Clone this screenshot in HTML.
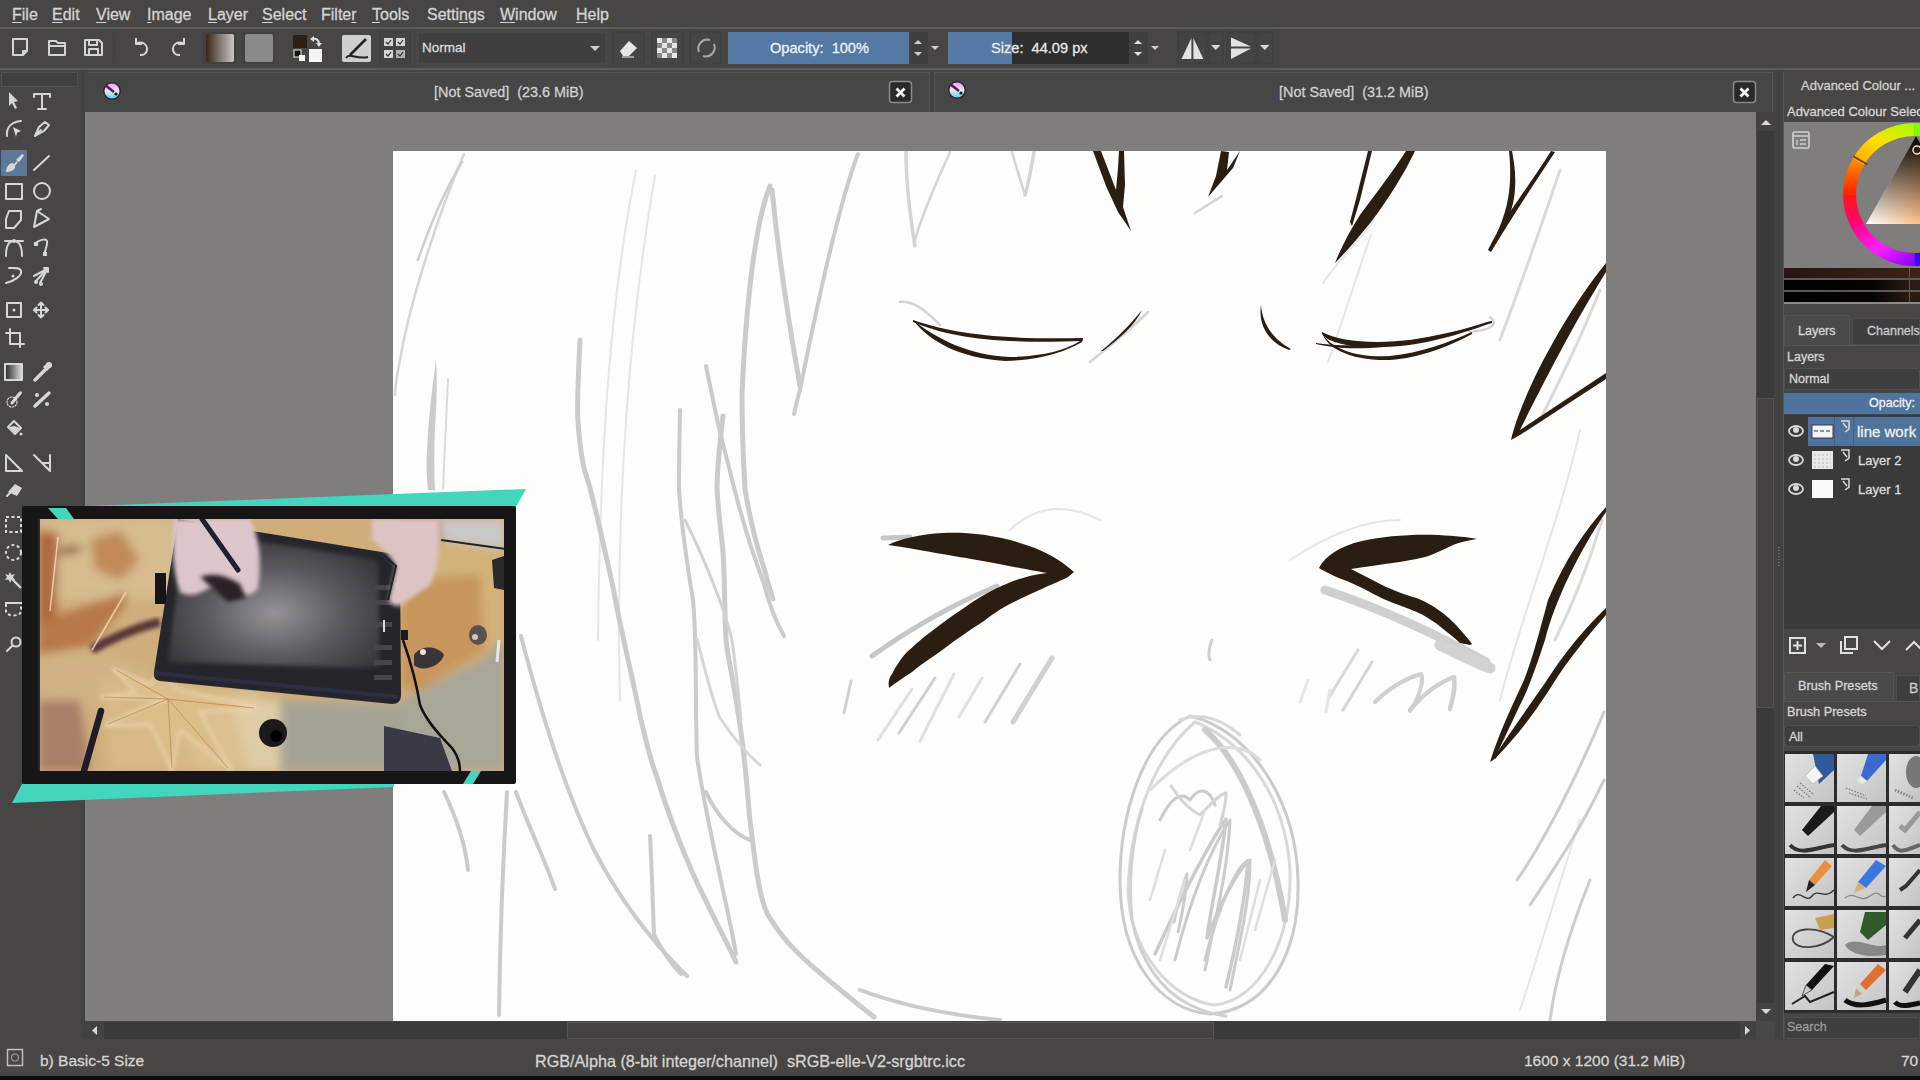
<!DOCTYPE html>
<html><head><meta charset="utf-8">
<style>
*{margin:0;padding:0;box-sizing:border-box}
html,body{width:1920px;height:1080px;overflow:hidden;background:#484848;font-family:"Liberation Sans",sans-serif;color:#d8d8d8}
.a{position:absolute}
.t{position:absolute;white-space:nowrap;color:#d6d6d6;line-height:1;-webkit-text-stroke:0.3px currentColor}
.menu .t{top:7px;font-size:16px;color:#d4d4d4}
u{text-decoration-thickness:1px;text-underline-offset:2px}
svg{position:absolute;left:0;top:0}
</style></head><body>
<!-- ===== backgrounds ===== -->
<div class="a" style="left:0;top:0;width:1920px;height:28px;background:#474644"></div>
<div class="a" style="left:0;top:27px;width:1920px;height:2px;background:#5a5a5a"></div>
<div class="a" style="left:0;top:29px;width:1920px;height:39px;background:#474644"></div>
<div class="a" style="left:0;top:68px;width:1920px;height:2px;background:#5a5a5a"></div>

<!-- left toolbox -->
<div class="a" style="left:0;top:70px;width:83px;height:970px;background:#474644"></div>
<div class="a" style="left:1px;top:72px;width:77px;height:15px;background:#414141;border:1px solid #525252"></div>
<div class="a" style="left:81px;top:70px;width:4px;height:970px;background:#424242"></div>

<!-- tab bar -->
<div id="tabbar" class="a" style="left:85px;top:70px;width:1691px;height:42px;background:#464646"></div>
<div class="a" style="left:88px;top:72px;width:1685px;height:1px;background:#555"></div>
<div class="a" style="left:929px;top:72px;width:6px;height:40px;background:#424140;border-left:1px solid #555;border-right:1px solid #555"></div>
<div class="a" style="left:1772px;top:72px;width:1px;height:40px;background:#555"></div>

<!-- canvas area -->
<div class="a" style="left:85px;top:112px;width:1671px;height:909px;background:#7f7e7c"></div>
<div class="a" style="left:393px;top:151px;width:1213px;height:870px;background:#fdfdfb"></div>
<!-- v scrollbar -->
<div class="a" style="left:1756px;top:112px;width:19px;height:909px;background:#434240"></div>
<div class="a" style="left:1757px;top:131px;width:17px;height:872px;background:#3a3a39"></div>
<div class="a" style="left:1757px;top:398px;width:17px;height:310px;background:#444341;border:1px solid #555452"></div>
<!-- h scrollbar -->
<div class="a" style="left:85px;top:1021px;width:1671px;height:18px;background:#434240"></div>
<div class="a" style="left:104px;top:1022px;width:1636px;height:17px;background:#3a3a39"></div>
<div class="a" style="left:567px;top:1022px;width:647px;height:17px;background:#444341;border:1px solid #555452"></div>

<!-- right docker -->
<div class="a" style="left:1775px;top:70px;width:9px;height:970px;background:#424242"></div>
<div class="a" style="left:1783px;top:72px;width:1px;height:968px;background:#555"></div>
<div class="a" style="left:1784px;top:70px;width:136px;height:970px;background:#474644"></div>
<div class="a" style="left:1784px;top:122px;width:136px;height:146px;background:#7f7e7c"></div>

<!-- status bar -->
<div class="a" style="left:0;top:1039px;width:1920px;height:37px;background:#474644"></div>
<div class="a" style="left:0;top:1076px;width:1920px;height:4px;background:#0c0c0c"></div>

<!-- ===== menu ===== -->
<div class="menu">
<span class="t" style="left:12px"><u>F</u>ile</span><span class="t" style="left:52px"><u>E</u>dit</span><span class="t" style="left:96px"><u>V</u>iew</span><span class="t" style="left:147px"><u>I</u>mage</span><span class="t" style="left:208px"><u>L</u>ayer</span><span class="t" style="left:262px"><u>S</u>elect</span><span class="t" style="left:321px">Filte<u>r</u></span><span class="t" style="left:372px"><u>T</u>ools</span><span class="t" style="left:427px">Setti<u>n</u>gs</span><span class="t" style="left:500px"><u>W</u>indow</span><span class="t" style="left:576px"><u>H</u>elp</span>
</div>

<!-- ===== toolbar ===== -->
<svg width="1920" height="70" viewBox="0 0 1920 70">
<g fill="none" stroke="#d4d4d4" stroke-width="2" stroke-linejoin="round">
 <!-- new -->
 <path d="M13 39 H27 V51 L23 55 H13 Z"/><path d="M27 51 H23 V55" fill="#d4d4d4"/>
 <!-- open -->
 <path d="M49 41 H56 L58 43 H65 V55 H49 Z"/><path d="M49 46 H65"/>
 <!-- save -->
 <path d="M85 40 H99 L102 43 V55 H85 Z"/><path d="M89 40 V45 H97 V40"/><path d="M89 55 V49 H98 V55"/>
 <!-- undo -->
 <path d="M137 43 C150 40 150 56 140 55"/><path d="M136 38 L136 44 L142 44" />
 <!-- redo -->
 <path d="M183 43 C170 40 170 56 180 55"/><path d="M184 38 L184 44 L178 44"/>
</g>
<g fill="none" stroke="#3e3e3e" stroke-width="1">
 <rect x="113.5" y="36.5" width="0.5" height="24" opacity="0.5"/>
</g>
<!-- gradient -->
<defs>
 <linearGradient id="gbr" x1="0" x2="1"><stop offset="0" stop-color="#3a2417"/><stop offset="1" stop-color="#c8c8c8"/></linearGradient>
 <linearGradient id="ggr" x1="0" x2="1"><stop offset="0" stop-color="#2b1d12"/><stop offset="1" stop-color="#f0f0f0"/></linearGradient>
</defs>
<rect x="203" y="32" width="33" height="32" fill="#404040" />
<rect x="206" y="34" width="28" height="28" rx="2" fill="url(#gbr)"/>
<rect x="242" y="32" width="33" height="32" fill="#404040" />
<rect x="245" y="34" width="28" height="28" rx="2" fill="#8a8a8a"/>
<!-- fg/bg -->
<rect x="293" y="35" width="14" height="13" fill="#2c2016"/>
<rect x="309" y="49" width="13" height="13" fill="#f4f4f4"/>
<rect x="294" y="50" width="7" height="7" fill="#111" stroke="#eee" stroke-width="1"/>
<rect x="299" y="55" width="6" height="6" fill="#f4f4f4"/>
<path d="M313 39 C316 38 319 40 319 44" fill="none" stroke="#e0e0e0" stroke-width="2"/><path d="M310 39 l4 -3 v6 z M316 43 h6 l-3 4 z" fill="#e0e0e0"/>
<!-- brush preset -->
<rect x="342" y="35" width="29" height="27" rx="2" fill="#cfcfcf"/>
<path d="M350 55 L366 39" stroke="#222" stroke-width="2.5"/><path d="M346 58 C350 52 356 60 368 57" stroke="#222" stroke-width="2" fill="none"/>
<!-- grid icon -->
<rect x="380" y="32" width="30" height="32" fill="#444" stroke="#3c3c3c"/>
<g fill="#d4d4d4"><rect x="384" y="38" width="9" height="8"/><rect x="396" y="38" width="9" height="8"/><rect x="384" y="50" width="9" height="8"/><rect x="396" y="50" width="9" height="8" fill="#b0b0b0"/></g><path d="M386 42 l2 2 l3 -4 M398 42 l2 2 l3 -4 M386 54 l2 2 l3 -4 M398 54 l2 2 l3 -4" stroke="#333" stroke-width="1.2" fill="none"/>
<!-- normal combo -->
<rect x="418" y="32" width="188" height="32" rx="2" fill="#3f3f3f" stroke="#4c4c4c"/>
<path d="M590 46 h10 l-5 5 z" fill="#d0d0d0"/>
<!-- eraser / checker / reload -->
<rect x="613" y="32" width="31" height="32" rx="2" fill="#454545" stroke="#3d3d3d"/>
<path d="M620 51 L629 41 L637 48 L629 56 H623 Z" fill="#e6e6e6"/><path d="M622 57 H634" stroke="#bbb" stroke-width="1.5"/>
<rect x="652" y="32" width="31" height="32" rx="2" fill="#454545" stroke="#3d3d3d"/>
<g><rect x="657" y="38" width="20" height="20" fill="#e6e6e6"/><rect x="662" y="38" width="5" height="5" fill="#888"/><rect x="672" y="38" width="5" height="5" fill="#888"/><rect x="657" y="43" width="5" height="5" fill="#888"/><rect x="667" y="43" width="5" height="5" fill="#888"/><rect x="662" y="48" width="5" height="5" fill="#888"/><rect x="672" y="48" width="5" height="5" fill="#888"/><rect x="657" y="53" width="5" height="5" fill="#888"/><rect x="667" y="53" width="5" height="5" fill="#888"/></g>
<rect x="690" y="32" width="31" height="32" rx="2" fill="#454545" stroke="#3d3d3d"/>
<path d="M699 52 A9 9 0 0 1 710 40 M714 44 A9 9 0 0 1 703 56" stroke="#a8a8a8" stroke-width="2" fill="none"/>
<!-- opacity slider -->
<rect x="728" y="32" width="181" height="32" fill="#5479a3"/>
<rect x="909" y="32" width="19" height="32" fill="#404040"/>
<path d="M914 44 l4 -4 l4 4 z M914 52 l4 4 l4 -4 z" fill="#cfcfcf"/>
<path d="M931 46 h8 l-4 4 z" fill="#cfcfcf"/>
<!-- size slider -->
<rect x="948" y="32" width="181" height="32" fill="#2e2e2e"/>
<rect x="948" y="32" width="64" height="32" fill="#5479a3"/>
<rect x="1129" y="32" width="19" height="32" fill="#404040"/>
<path d="M1134 44 l4 -4 l4 4 z M1134 52 l4 4 l4 -4 z" fill="#e0e0e0"/>
<path d="M1151 46 h8 l-4 4 z" fill="#cfcfcf"/>
<!-- mirror -->
<rect x="1178" y="32" width="28" height="32" fill="#444" stroke="#3c3c3c"/>
<rect x="1208" y="32" width="15" height="32" fill="#444" stroke="#3c3c3c"/>
<rect x="1227" y="32" width="29" height="32" fill="#444" stroke="#3c3c3c"/>
<rect x="1258" y="32" width="15" height="32" fill="#444" stroke="#3c3c3c"/>
<path d="M1181.5 59 L1191.4 38 V59 Z M1193.4 38 V59 H1203.4 Z" fill="#e2e2e2"/>
<path d="M1211 45 h9.5 l-4.75 5 z M1260 45 h9.5 l-4.75 5 z" fill="#d8d8d8"/>
<path d="M1231 37.5 V46.5 H1251 Z M1231 48.5 H1251 L1231 59 Z" fill="#e2e2e2"/>
</svg>
<span class="t" style="left:422px;top:41px;font-size:13.5px;color:#dcdcdc">Normal</span>
<span class="t" style="left:770px;top:41px;font-size:14.6px;color:#eef2f8">Opacity:&nbsp; 100%</span>
<span class="t" style="left:991px;top:41px;font-size:14.6px;color:#e8e8e8">Size:&nbsp; 44.09 px</span>


<!-- ===== toolbox ===== -->
<svg width="85" height="680" viewBox="0 0 85 680">
<rect x="1" y="150" width="26" height="26" rx="1" fill="#5d7898"/>
<g fill="none" stroke="#d6d6d6" stroke-width="2" stroke-linejoin="round" stroke-linecap="round">
 <!-- T -->
 <path d="M34 94 V97 M34 94 H50 V97 M42 94 V109 M38 109 H46"/>
 <!-- curve arrow -->
 <path d="M7 136 C6 127 12 122 21 121"/>
 <!-- pen nib -->
 <path d="M35 136 L39 127 L45 122 L49 125 L44 131 Z M35 136 L41 130"/>
 <!-- line -->
 <path d="M34 170 L49 156"/>
 <!-- rect / circle -->
 <rect x="6" y="184" width="16" height="15"/>
 <circle cx="42" cy="191" r="8"/>
 <!-- polygon -->
 <path d="M9 211 H21 V220 L14 228 H6 V219 Z"/>
 <!-- polyline triangle -->
 <path d="M34 227 L37 211 L49 219 Z M37 211 L41 209"/>
 <!-- bezier -->
 <path d="M6 256 C6 244 10 241 14 241 C18 241 22 244 22 256 M5 241 H23"/>
 <!-- path -->
 <path d="M35 244 C38 240 46 238 47 241 C48 246 44 250 45 255"/>
 <!-- freehand path -->
 <path d="M6 283 C14 281 22 276 21 271 C20 267 14 268 9 268"/>
 <!-- multibrush -->
 <path d="M36 281 L48 268 M40 283 L47 270 M34 276 L47 269 M44 268 H48 V272"/>
 <!-- transform -->
 <rect x="7" y="303" width="14" height="14"/>
 <!-- move -->
 <path d="M41 303 V317 M34 310 H48"/><path d="M38.5 305 L41 302.5 L43.5 305 M38.5 315 L41 317.5 L43.5 315 M36.5 307.5 L34 310 L36.5 312.5 M45.5 307.5 L48 310 L45.5 312.5"/>
 <!-- crop -->
 <path d="M10 329 V344 H24 M6 333 H20 V347"/>
 <!-- gradient box -->
 <rect x="5" y="364" width="17" height="16" />
 <!-- picker -->
 <path d="M35 380 L45 370" stroke-width="3.5"/>
 <!-- smart patch -->
 <path d="M12 403 L20 393" stroke-width="3"/><circle cx="12" cy="402" r="5" stroke-dasharray="1.5 1.5" stroke-width="1.2"/>
 <!-- % -->
 <path d="M35 406 L49 393" stroke-width="3.5"/>
 <!-- fill -->
 <path d="M8 427 L14 421 L21 428 L15 434 Z"/>
 <!-- measure -->
 <path d="M6 455 V471 H22 Z"/>
 <!-- assistant -->
 <path d="M34 455 L50 471 V455 M42 463 H50"/>
 <!-- pin -->
 <path d="M7 496 L13 490"/>
 <!-- zoom -->
 <circle cx="16" cy="642" r="4.5"/><path d="M12.5 645.5 L7 651"/>
</g>
<g fill="#d6d6d6">
 <path d="M9 92 L18 101 L14 102 L17 108 L15 109 L12 103 L9 106 Z"/>
 <path d="M13 127 L21 131 L17 133 L16 137 Z"/>
 <path d="M6 172 C6 167 9 163 13 163 L15 165 C16 169 12 172 6 172 Z"/><path d="M14 164 L17 161 L18 162 L15 166 Z"/><path d="M16 160 L20 156 C22 153 25 154 23 157 L19 162 Z"/>
 <circle cx="14" cy="241" r="2"/>
 <rect x="34" y="242" width="4" height="4"/><rect x="43" y="252" width="4" height="4"/>
 <circle cx="13" cy="276" r="1.5"/>
 <circle cx="36" cy="282" r="2"/><circle cx="41" cy="284" r="2"/>
 <circle cx="14" cy="310" r="1.5"/>
 <rect x="6" y="365" width="16" height="14" fill="url(#tgrad)"/>
 <path d="M43 367 L48 362 L52 366 L47 371 Z"/><circle cx="49" cy="365" r="3"/>
 <path d="M17 395 L21 391 L22 393 L18 398 Z"/>
 <circle cx="37" cy="395" r="2"/><circle cx="47" cy="404" r="2"/>
 <path d="M9 427 L15 433 L20 428 L14 426 Z"/><circle cx="21" cy="434" r="1.5"/>
 <path d="M8 492 L15 484 L22 488 L17 496 Z"/>
 <path d="M10 572 L11.5 575 L15 574 L13 577 L15 580 L11.5 579.5 L10 583 L8.5 579.5 L5 580 L7 577 L5 574 L8.5 575 Z"/>
</g>
<defs><linearGradient id="tgrad" x1="0" x2="1"><stop offset="0" stop-color="#333"/><stop offset="1" stop-color="#ddd"/></linearGradient></defs>
<g fill="none" stroke="#d8d8d8" stroke-width="2" stroke-dasharray="3 2.5">
 <rect x="6" y="517" width="15" height="15"/>
 <circle cx="13.5" cy="552.5" r="7.5"/>
 <path d="M6 604 V611 C6 617 21 617 21 611 V604"/>
</g>
<path d="M12 579 L21 588" stroke="#d8d8d8" stroke-width="2.2"/>
<path d="M5 603 H22" stroke="#d8d8d8" stroke-width="2"/>
</svg>


<!-- ===== tabs ===== -->
<svg width="1920" height="140" viewBox="0 0 1920 140" style="top:0">
<defs>
 <linearGradient id="kico" x1="0" y1="0" x2="0" y2="1"><stop offset="0" stop-color="#f09cf0"/><stop offset="0.5" stop-color="#f6e6f0"/><stop offset="0.55" stop-color="#c8f0f4"/><stop offset="1" stop-color="#66d0e0"/></linearGradient>
</defs>
<g id="kri">
 <circle cx="112" cy="91" r="9" fill="#2a2a3a"/>
 <circle cx="112" cy="91" r="7.5" fill="url(#kico)"/>
 <path d="M105 85 L114 92" stroke="#5a1a50" stroke-width="2.5"/>
 <circle cx="116" cy="94" r="1.6" fill="#111"/>
</g>
<use href="#kri" x="845" y="-1"/>
<!-- close buttons -->
<rect x="889.5" y="81.5" width="22" height="21" rx="3" fill="#2a2a2a" stroke="#8a8a8a" stroke-width="1.5"/>
<path d="M896.5 88.5 L904.5 96.5 M904.5 88.5 L896.5 96.5" stroke="#f4f4f4" stroke-width="2.8"/>
<rect x="1733.5" y="81.5" width="22" height="21" rx="3" fill="#2a2a2a" stroke="#8a8a8a" stroke-width="1.5"/>
<path d="M1740.5 88.5 L1748.5 96.5 M1748.5 88.5 L1740.5 96.5" stroke="#f4f4f4" stroke-width="2.8"/>
<!-- scroll up arrow -->
<path d="M1761 125 L1766 120 L1771 125 Z" fill="#d8d8d8"/>
</svg>
<span class="t" style="left:434px;top:85px;font-size:14.4px;color:#d0d0d0">[Not Saved]&nbsp; (23.6 MiB)</span>
<span class="t" style="left:1279px;top:85px;font-size:14.4px;color:#d0d0d0">[Not Saved]&nbsp; (31.2 MiB)</span>


<!-- ===== drawing ===== -->
<svg width="1920" height="1080" viewBox="0 0 1920 1080">
<defs><clipPath id="paper"><rect x="393" y="151" width="1213" height="870"/></clipPath></defs>
<g clip-path="url(#paper)" fill="none" stroke-linecap="round" stroke-linejoin="round">
 <!-- very light sketch -->
 <g stroke="#e6e6e6" stroke-width="2">
  <path d="M636 170 C610 300 600 450 598 640"/>
  <path d="M655 175 C630 320 615 500 620 700"/>
  <path d="M1371 235 C1355 280 1340 330 1328 362"/><path d="M1375 219 C1355 245 1335 265 1323 283"/>
  <path d="M1580 430 C1560 520 1520 620 1500 700"/>
  <path d="M1580 820 C1560 880 1540 950 1520 1010"/>
  <path d="M1290 560 C1320 540 1360 520 1400 520"/>
  <path d="M1100 520 C1060 500 1030 510 1010 530"/>
 </g>
 <!-- medium grey sketch -->
 <g stroke="#cbcbcb" stroke-width="4">
  <path d="M464 154 C440 210 410 300 400 360 C396 380 395 390 395 395" stroke="#d6d6d6" stroke-width="2.5"/><path d="M462 162 C445 190 430 225 418 260" stroke="#cfcfcf" stroke-width="2.5"/>
  <path d="M448 379 C446 420 444 460 443 488" stroke="#dadada" stroke-width="2"/>
  <path d="M770 186 C756 220 746 300 742 395 C742 440 744 470 745 489 C750 520 758 550 764 568 C767 580 770 590 773 599" stroke-width="5"/>
  <path d="M772 190 C778 250 790 330 800 386" stroke-width="5"/>
  <path d="M858 154 C840 200 818 300 800 390 C797 400 795 410 794 414"/>
  <path d="M706 366 C712 395 716 415 720 432 C726 455 732 480 736 495 C745 530 755 560 764 584 C768 600 775 620 784 636"/>
  <path d="M680 410 C679 450 679 470 679 489 C681 520 685 552 693 600 C697 640 695 700 697 757 C702 790 712 840 720 876 C726 905 732 930 736 954"/>
  <path d="M723 416 C719 450 717 470 717 489 C719 520 722 540 723 552 C725 580 724 600 726 640 C728 660 738 700 744 757 C748 790 748 810 752 836 C756 870 760 900 768 915 C780 935 790 945 799 954 C815 970 835 986 874 1017" stroke-width="5"/><path d="M685 520 C700 550 708 570 713 583 C720 600 727 620 732 640 C735 660 738 690 741 720" stroke="#d2d2d2" stroke-width="3"/>
  
  <path d="M521 636 C535 690 560 780 594 850 C620 900 650 940 687 976"/>
  
  <path d="M650 836 C652 870 653 910 654 935 C662 950 672 965 681 974"/><path d="M697 639 C705 670 712 700 720 718 C735 740 748 755 760 765" stroke="#d6d6d6" stroke-width="3"/>
  
  <path d="M507 792 C503 860 500 940 499 1015"/>
  <path d="M444 792 C455 815 465 840 468 870"/>
  <path d="M516 792 C530 830 545 860 555 889"/>
  <path d="M706 792 C716 815 735 835 750 840"/>
  <path d="M860 990 C900 1005 950 1015 1000 1020"/>
  <path d="M580 340 C578 380 577 410 578 421 C580 450 584 470 587 478 C594 500 600 530 609 569 C614 590 618 615 622 632 C628 660 635 690 641 720 C646 740 650 760 657 777 C668 815 690 870 705 899 C715 920 728 945 736 962" stroke-width="5"/>
  <path d="M436 360 C432 390 428 420 427 450 C426 470 427 480 428 490 L435 490 C434 470 434 440 436 410 C437 390 437 375 436 360 Z" fill="#cbcbcb" stroke="none"/>
 </g>
 <!-- shadow greys near eyes -->
 <g stroke="#c6c6c6" stroke-width="5">
  <path d="M872 656 C900 636 940 610 997 586"/>
  <path d="M883 538 L910 537"/>
  <path d="M1325 590 C1370 605 1420 625 1486 662" stroke-width="9" stroke="#cfcfcf"/><path d="M1440 645 C1460 655 1475 662 1490 668" stroke-width="11" stroke="#d2d2d2"/>
 </g>
 <!-- blush -->
 <g stroke="#d0d0d0" stroke-width="3">
  <path d="M851 681 L844 713"/><path d="M935 678 L899 733"/><path d="M912 689 L878 740" stroke="#e0e0e0"/>
  <path d="M954 674 L920 741" stroke="#e0e0e0"/><path d="M982 678 L959 717" stroke="#e0e0e0"/>
  <path d="M1020 664 L985 722"/><path d="M1052 658 L1013 722" stroke-width="5"/>
  <path d="M1358 650 L1328 699" stroke="#d8d8d8"/><path d="M1372 662 L1343 710" stroke="#d4d4d4"/>
  <path d="M1308 680 L1300 702" stroke="#e6e6e6"/><path d="M1330 690 L1326 712" stroke="#e6e6e6"/>
  <path d="M1375 702 C1385 692 1400 680 1421 674 C1425 680 1418 700 1410 711" stroke-width="4"/>
  <path d="M1410 710 C1420 698 1435 684 1454 677 C1456 690 1452 700 1450 709" stroke-width="4.5"/>
  </g>
 <!-- mouth -->
 <g stroke="#cbcbcb" stroke-width="3">
  <path d="M1190 716 C1140 740 1120 820 1120 880 C1120 960 1160 1010 1210 1014 C1270 1010 1300 950 1298 880 C1296 800 1250 730 1190 716 Z"/>
  <path d="M1195 722 C1150 760 1130 830 1128 890 C1130 950 1170 1000 1215 1005 C1260 1000 1292 940 1290 870 C1285 790 1240 740 1195 722" stroke="#d8d8d8"/>
  <path d="M1205 730 C1240 760 1270 830 1285 920" stroke-width="6"/>
  <path d="M1160 820 C1170 800 1180 790 1190 800 C1200 785 1210 790 1215 805"/>
  <path d="M1175 960 C1190 900 1210 850 1230 820 C1228 870 1215 920 1205 970"/>
  <path d="M1205 960 C1220 900 1240 860 1250 860 C1250 900 1240 940 1230 990"/>
  <path d="M1150 790 C1200 740 1240 740 1260 760" stroke="#dcdcdc"/>
  <path d="M1155 954 C1180 900 1205 850 1226 819 C1222 860 1212 900 1207 938 C1220 905 1235 875 1248 861 C1245 900 1235 950 1226 987" stroke-width="3.5"/>
  <path d="M1174 922 C1178 900 1183 885 1187 874 C1186 895 1182 915 1178 932"/>
  <path d="M1171 786 C1180 800 1190 810 1200 815 C1210 805 1218 795 1226 793 C1226 805 1223 815 1220 825" stroke="#d4d4d4"/>
  <path d="M1142 809 C1132 840 1128 880 1132 920 C1140 960 1160 990 1190 1005 C1205 1012 1215 1015 1226 1016" stroke="#d0d0d0"/>
  <path d="M1150 900 L1165 850 M1160 960 L1185 880 M1240 960 L1260 880 M1255 930 L1275 860 M1190 850 L1205 810" stroke="#dedede" stroke-width="2.5"/>
  <path d="M1180 720 C1200 712 1220 718 1240 735" stroke="#d8d8d8"/>
 </g>
 <!-- right lower grey -->
 <g stroke="#cdcdcd" stroke-width="3">
  <path d="M1604 712 C1580 770 1545 840 1517 880"/>
  <path d="M1604 780 C1580 830 1560 860 1530 905"/>
  <path d="M1590 880 C1570 930 1555 980 1550 1021"/>
  <path d="M1602 520 C1590 560 1575 600 1555 640" stroke="#dadada"/>
  <path d="M1560 170 C1540 230 1515 300 1500 340" stroke="#dadada"/>
  <path d="M1600 290 C1580 340 1560 380 1540 420" stroke="#dadada"/>
 </g>
 <!-- grey around top lines -->
 <g stroke="#d4d4d4" stroke-width="2.5">
  <path d="M906 151 C906 180 909 210 915 246" stroke-width="3.5"/>
  <path d="M950 152 C935 185 922 215 915 240"/>
  <path d="M1012 152 C1017 170 1022 185 1025 195"/>
  <path d="M1034 152 C1031 170 1028 185 1025 195" stroke-width="3.5"/>
  <path d="M1222 196 L1195 213"/>
  <path d="M900 302 C915 300 930 315 940 325"/>
  <path d="M1148 312 C1130 330 1105 350 1090 362"/>
  <path d="M1490 317 C1500 325 1490 330 1470 332"/>
 </g>
 <!-- dark line work -->
 <g fill="#2a1d12" stroke="none">
  <path d="M1093 151 L1101 151 L1116 190 L1118 168 L1119 151 L1124 151 L1125 185 L1123 207 L1131 231 L1118 212 L1106 186 Z"/>
  <path d="M1221 151 L1229 152 L1227 170 L1240 151 L1233 168 L1208 197 L1216 176 Z"/>
  <path d="M1406 151 L1415 151 C1405 172 1390 197 1371 222 C1358 238 1346 252 1335 263 C1341 248 1349 232 1360 215 C1377 192 1394 170 1406 151 Z"/>
  <path d="M1368 151 L1372 151 L1360 200 L1352 226 L1350 222 L1357 195 Z"/>
  <path d="M1509 151 L1512 151 C1518 180 1516 205 1505 225 L1500 235 L1497 233 C1510 205 1512 180 1509 151 Z"/>
  <path d="M1551 151 L1555 152 C1530 190 1510 220 1491 252 L1488 250 C1505 215 1530 185 1551 151 Z"/>
  <path d="M1606 263 L1606 272 C1570 330 1540 390 1520 430 L1606 373 L1606 379 L1520 435 L1511 440 C1520 400 1560 320 1606 263 Z"/>
  <!-- closed eye left -->
  <path d="M913 320 C950 333 1000 340 1083 338 L1082 341 C1000 344 950 338 913 322 Z"/>
  <path d="M913 320 C935 338 970 356 1010 357 C1050 356 1070 348 1083 339 L1082 342 C1065 352 1040 360 1005 361 C960 358 930 342 913 320 Z"/>
  <path d="M1142 310 C1130 325 1115 340 1101 351 L1103 351 C1120 338 1135 325 1142 310 Z"/>
  <!-- closed eye right -->
  <path d="M1261 305 C1262 320 1270 338 1291 349 L1289 350 C1268 342 1258 325 1261 305 Z"/>
  <path d="M1322 332 C1345 345 1400 345 1450 333 C1470 328 1485 322 1492 321 L1492 323 C1470 330 1440 342 1400 346 C1360 349 1330 345 1322 334 Z"/>
  <path d="M1322 332 C1330 350 1360 358 1390 356 C1420 353 1450 342 1472 332 L1472 334 C1450 346 1420 358 1390 360 C1350 361 1326 348 1322 332 Z"/>
  <path d="M1316 343 C1350 348 1400 346 1476 326 L1476 328 C1400 350 1350 352 1316 344 Z"/>
  <!-- eye > -->
  <path d="M888 545 C900 539 920 534 943 533 C970 532 1000 535 1035 548 C1052 555 1064 563 1074 572 L1068 577 C1060 581 1055 583 1048 586 C1040 590 1030 594 1022 598 C1005 606 995 612 984 621 C970 630 958 638 945 648 C930 659 920 665 912 672 C903 678 895 683 889 688 C888 682 889 678 892 674 C896 666 900 660 906 653 C915 645 922 638 932 631 C942 623 952 616 964 608 C975 600 985 594 997 588 C1008 583 1015 580 1023 578 C1032 575 1040 574 1047 573 C1035 571 1010 566 977 560 C955 556 935 553 902 547 Z"/>
  <!-- eye < -->
  <path d="M1319 568 C1325 556 1340 546 1362 541 C1385 536 1410 534 1439 535 C1455 536 1468 537 1477 539 C1465 541 1458 543 1453 545 C1440 551 1432 555 1425 557 C1405 562 1383 564 1351 569 L1386 587 C1400 593 1410 596 1419 599 C1428 603 1433 606 1437 609 C1445 614 1450 619 1456 625 C1462 632 1468 638 1472 644 L1470 645 L1460 643 C1455 638 1448 633 1442 628 C1435 622 1428 618 1423 615 C1415 611 1405 607 1396 604 C1385 600 1375 595 1368 591 C1360 587 1350 582 1340 578.5 C1330 574 1324 571 1319 568 Z"/>
  <!-- right lower strokes -->
  <path d="M1606 507 L1606 512 C1580 550 1555 600 1545 640 C1535 670 1528 690 1520 705 L1495 758 L1490 762 C1500 730 1515 700 1524 680 C1532 660 1540 630 1548 600 C1565 560 1585 530 1606 507 Z"/>
  <path d="M1606 608 L1606 615 C1586 638 1568 660 1553 684 C1538 708 1515 740 1491 762 C1508 735 1530 705 1547 680 C1565 652 1585 628 1606 608 Z"/>
 </g>
 <path d="M1604 612 C1570 650 1540 700 1495 758" stroke="#2a1d12" stroke-width="1.5"/>
 <path d="M1212 640 C1208 650 1208 655 1210 660" stroke="#cfcfcf" stroke-width="3"/>
</g>
</svg>


<!-- ===== webcam overlay ===== -->
<svg width="1920" height="1080" viewBox="0 0 1920 1080">
<defs>
 <clipPath id="photo"><rect x="38" y="519" width="466" height="252"/></clipPath>
 <filter id="bl2" x="-20%" y="-20%" width="140%" height="140%"><feGaussianBlur stdDeviation="2"/></filter>
 <filter id="bl5" x="-30%" y="-30%" width="160%" height="160%"><feGaussianBlur stdDeviation="5"/></filter>
 <filter id="bl10" x="-50%" y="-50%" width="200%" height="200%"><feGaussianBlur stdDeviation="10"/></filter>
 <radialGradient id="tab" cx="0.5" cy="0.6" r="0.65"><stop offset="0" stop-color="#959398"/><stop offset="0.5" stop-color="#5a595e"/><stop offset="1" stop-color="#303034"/></radialGradient>
 <linearGradient id="leafbg" x1="0" y1="0" x2="1" y2="1"><stop offset="0" stop-color="#c9a47a"/><stop offset="0.5" stop-color="#c89a62"/><stop offset="1" stop-color="#d8bc8c"/></linearGradient>
 <linearGradient id="face" x1="0" y1="0" x2="0" y2="1"><stop offset="0" stop-color="#c8a468"/><stop offset="0.5" stop-color="#c09058"/><stop offset="1" stop-color="#a8a290"/></linearGradient>
</defs>
<!-- teal bands -->
<path d="M90 506 L526 489 L516 507 Z" fill="#43d6bf"/>
<path d="M12 803 L394 787 L394 784 L22 784 Z" fill="#43d6bf"/>
<!-- black frame -->
<rect x="22" y="506" width="494" height="278" rx="2" fill="#161616"/>
<path d="M48 508 L66 508 L74 519 L58 519 Z" fill="#43d6bf"/>
<path d="M463 784 L471 771 L481 771 L473 784 Z" fill="#43d6bf"/>
<!-- photo -->
<g clip-path="url(#photo)">
 <rect x="38" y="519" width="466" height="252" fill="#cfae7c"/>
 <g filter="url(#bl5)">
  <rect x="38" y="519" width="140" height="80" fill="#d6bc8e"/>
  <path d="M38 530 L58 532 L56 620 L38 640 Z" fill="#b0683c"/>
  <path d="M60 548 L80 545 L80 552 L60 555 Z" fill="#7a4a30"/>
  <path d="M90 540 L120 530 L140 560 L120 580 L95 570 Z" fill="#c28a58"/>
  <path d="M58 615 L126 592 L125 605 L92 645 L38 655 L38 625 Z" fill="#b8784a"/>
  <path d="M38 655 L100 650 L150 670 L140 700 L90 710 L38 700 Z" fill="#d2b284"/>
  <path d="M38 700 L80 700 L90 771 L38 771 Z" fill="#a88068"/>
  <path d="M100 680 L258 690 L250 771 L110 771 Z" fill="#d8b886"/>
  <path d="M170 700 L260 690 L290 771 L200 771 Z" fill="#dcc08e"/>
  <path d="M230 700 L300 700 L300 771 L250 771 Z" fill="#e0cca4"/>
  <path d="M280 700 L400 704 L400 771 L280 771 Z" fill="#a6a494"/>
  <path d="M400 570 L480 560 L505 600 L505 771 L400 771 Z" fill="#a8a696"/>
  <path d="M400 548 L441 540 L505 549 L505 640 L480 660 L400 700 Z" fill="#d2b278"/>
  <path d="M401 580 L480 575 L485 650 L420 690 L401 690 Z" fill="#c8955c"/>
  <path d="M439 519 L505 519 L505 549 L441 540 Z" fill="#c9c9c9"/>
  <path d="M400 519 L440 519 L440 545 L400 550 Z" fill="#b87a48"/>
 </g>
 <path d="M441 540 L505 549" stroke="#222" stroke-width="2"/>
 <path d="M92 650 C108 640 135 628 160 622" stroke="#5a3438" stroke-width="9" fill="none" filter="url(#bl2)"/>
 <path d="M168 699 L100 697 L135 692 L112 668 L150 684 L160 672 L180 690 L258 708 L200 712 L232 771 L180 730 L172 771 L150 725 L104 726 L145 706 Z" fill="#dcbe8a" stroke="#f0e2c4" stroke-width="1.5" filter="url(#bl2)"/>
 <g stroke="#c08048" stroke-width="1" fill="none" opacity="0.7"><path d="M168 699 L104 697 M168 699 L116 670 M168 699 L254 708 M168 699 L228 768 M168 699 L172 768 M168 699 L108 724"/></g>
 <g stroke="#f2e2c0" stroke-width="1.5" fill="none" opacity="0.8"><path d="M58 537 L50 611"/><path d="M126 592 L92 650"/></g>
 <!-- tablet -->
 <path d="M178 519 L400 555 L401 695 Q401 704 392 704 L160 681 Q153 680 154 672 Z" fill="#25262c"/>
 <path d="M185 530 L378 560 L380 668 L168 662 Z" fill="url(#tab)" filter="url(#bl2)"/>
 <path d="M154 673 L398 697" stroke="#2c2e44" stroke-width="4"/>
 <g fill="#45464c"><rect x="374" y="585" width="18" height="5"/><rect x="374" y="600" width="18" height="5"/><rect x="374" y="622" width="18" height="5"/><rect x="374" y="645" width="18" height="5"/><rect x="374" y="660" width="18" height="5"/><rect x="374" y="675" width="18" height="5"/></g>
 <rect x="383" y="620" width="2" height="12" fill="#ddd"/>
 <rect x="155" y="573" width="11" height="31" fill="#161616"/>
 <!-- hands -->
 <path d="M174 519 L250 519 Q264 545 258 588 Q250 600 232 592 L212 586 Q192 600 180 592 Q170 565 174 519 Z" fill="#dcc6cc" filter="url(#bl2)"/>
 <path d="M200 577 Q218 570 240 584 L246 598 L228 602 Z" fill="#2a2226" filter="url(#bl2)"/>
 <path d="M202 519 L238 570" stroke="#1e2030" stroke-width="5" stroke-linecap="round"/>
 <path d="M372 519 L439 519 Q442 560 430 585 L400 606 Q386 606 390 594 L396 566 Q385 548 372 540 Z" fill="#dcc4c4" filter="url(#bl2)"/>
 <path d="M384 555 L396 566 L388 600" stroke="#222" stroke-width="2" fill="none"/>
 <!-- face details -->
 <path d="M414 655 C420 645 438 645 444 655 C440 668 420 672 414 665 Z" fill="#3a3438"/><circle cx="423" cy="652" r="3" fill="#f0e0d0"/>
 <ellipse cx="478" cy="635" rx="9" ry="10" fill="#5a5050"/><circle cx="475" cy="637" r="3" fill="#d0c8c0"/>
 <path d="M499 640 L497 662" stroke="#e8e8e8" stroke-width="3"/>
 <path d="M492 560 L504 556 L504 590 L494 588 Z" fill="#2a2a2a"/>
 <!-- cable / box / knob / stylus -->
 <path d="M403 640 C410 660 416 680 420 705 C428 725 445 740 452 748 C458 756 460 765 460 771" stroke="#111" stroke-width="2.5" fill="none"/>
 <rect x="401" y="630" width="7" height="10" fill="#1a1a1a"/>
 <path d="M384 726 L440 738 L452 771 L384 771 Z" fill="#3a3a46"/>
 <circle cx="273" cy="733" r="14" fill="#1a1a1a"/><circle cx="276" cy="736" r="6" fill="#000"/>
 <path d="M101 711 L84 771" stroke="#1e1e2a" stroke-width="6.5" stroke-linecap="round"/>
 <rect x="38" y="519" width="2" height="252" fill="#2a2a2a"/>
</g>
</svg>


<!-- ===== docker ===== -->
<div class="a" style="left:1784px;top:315px;width:66px;height:31px;background:#4a4a4a;border:1px solid #555;border-bottom:none;border-radius:2px 2px 0 0"></div>
<div class="a" style="left:1852px;top:318px;width:68px;height:27px;background:#3e3e3e;border:1px solid #4e4e4e;border-radius:2px 2px 0 0"></div>
<div class="a" style="left:1784px;top:345px;width:136px;height:1px;background:#555"></div>
<div class="a" style="left:1784px;top:368px;width:136px;height:22px;background:#3f3f3f;border:1px solid #505050;border-radius:2px"></div>
<div class="a" style="left:1784px;top:393px;width:136px;height:21px;background:#50739b"></div>
<div class="a" style="left:1784px;top:415px;width:136px;height:214px;background:#3a3a3a"></div>
<div class="a" style="left:1808px;top:417px;width:112px;height:29px;background:#50739b"></div>
<div class="a" style="left:1834px;top:417px;width:1px;height:29px;background:#3f5f85"></div>
<div class="a" style="left:1853px;top:417px;width:1px;height:29px;background:#3f5f85"></div>
<div class="a" style="left:1784px;top:672px;width:110px;height:30px;background:#4a4a4a;border:1px solid #555;border-bottom:none;border-radius:2px 2px 0 0"></div>
<div class="a" style="left:1896px;top:675px;width:24px;height:27px;background:#3e3e3e;border:1px solid #4e4e4e"></div>
<div class="a" style="left:1784px;top:701px;width:136px;height:1px;background:#555"></div>
<div class="a" style="left:1784px;top:725px;width:136px;height:22px;background:#3f3f3f;border:1px solid #505050;border-radius:2px"></div>
<div class="a" style="left:1784px;top:751px;width:136px;height:262px;background:#2c2c2c"></div>
<div class="a" style="left:1784px;top:1017px;width:136px;height:22px;background:#3f3f3f;border:1px solid #4e4e4e"></div>

<svg width="1920" height="1080" viewBox="0 0 1920 1080">
<defs>
 <linearGradient id="tile" x1="0" y1="0" x2="1" y2="1"><stop offset="0" stop-color="#e2e2e2"/><stop offset="1" stop-color="#c4c4c4"/></linearGradient>
 <radialGradient id="tri" cx="1" cy="0.2" r="1.1"><stop offset="0" stop-color="#e08a40"/><stop offset="0.6" stop-color="#b87a50"/><stop offset="1" stop-color="#f0e8e0"/></radialGradient>
 <linearGradient id="bar1" x1="0" x2="1"><stop offset="0" stop-color="#2a1414"/><stop offset="1" stop-color="#3a2214"/></linearGradient>
 <linearGradient id="bar2" x1="0" x2="1"><stop offset="0" stop-color="#000"/><stop offset="0.7" stop-color="#050302"/><stop offset="1" stop-color="#2a1a10"/></linearGradient>
 <clipPath id="cwclip"><rect x="1784" y="122" width="136" height="146"/></clipPath>
</defs>
<!-- colour selector icon -->
<rect x="1793" y="132" width="16" height="16" rx="1.5" fill="none" stroke="#cfcfcf" stroke-width="1.6"/>
<path d="M1793 136 H1809 M1797 140 V145 M1800 140 H1806 M1800 144 H1806" stroke="#cfcfcf" stroke-width="1.4"/>
<!-- wheel -->
<g clip-path="url(#cwclip)">
 <g transform="translate(1914.5 194.5)">
  <path d="M0 -71.5 A71.5 71.5 0 0 1 61.9 -35.75 L50.6 -29.25 A58.5 58.5 0 0 0 0 -58.5 Z" fill="#80ff00"/>
  <path d="M-61.9 -35.75 A71.5 71.5 0 0 1 0 -71.5 L0 -58.5 A58.5 58.5 0 0 0 -50.6 -29.25 Z" fill="url(#wy)"/>
  <path d="M-71.5 0 A71.5 71.5 0 0 1 -61.9 -35.75 L-50.6 -29.25 A58.5 58.5 0 0 0 -58.5 0 Z" fill="url(#wo)"/>
  <path d="M-61.9 35.75 A71.5 71.5 0 0 1 -71.5 0 L-58.5 0 A58.5 58.5 0 0 0 -50.6 29.25 Z" fill="url(#wr)"/>
  <path d="M0 71.5 A71.5 71.5 0 0 1 -61.9 35.75 L-50.6 29.25 A58.5 58.5 0 0 0 0 58.5 Z" fill="url(#wm)"/>
  <path d="M-61 -38 L-47 -30" stroke="#7a3a10" stroke-width="2"/>
 </g>
 <defs>
  <linearGradient id="wy" x1="0" y1="1" x2="1" y2="0"><stop offset="0" stop-color="#ffa000"/><stop offset="0.5" stop-color="#ffe000"/><stop offset="1" stop-color="#a0ff00"/></linearGradient>
  <linearGradient id="wo" x1="0" y1="1" x2="0" y2="0"><stop offset="0" stop-color="#ff2000"/><stop offset="1" stop-color="#ff9000"/></linearGradient>
  <linearGradient id="wr" x1="0" y1="1" x2="0" y2="0"><stop offset="0" stop-color="#ff0090"/><stop offset="1" stop-color="#ff1810"/></linearGradient>
  <linearGradient id="wm" x1="1" y1="1" x2="0" y2="0"><stop offset="0" stop-color="#8000ff"/><stop offset="0.5" stop-color="#ff20ff"/><stop offset="1" stop-color="#ff0080"/></linearGradient>
 </defs>
 <linearGradient id="triH" x1="1866" y1="0" x2="1966" y2="0" gradientUnits="userSpaceOnUse"><stop offset="0" stop-color="#ffffff"/><stop offset="1" stop-color="#ff8a20"/></linearGradient>
 <linearGradient id="triV" x1="0" y1="136" x2="0" y2="224" gradientUnits="userSpaceOnUse"><stop offset="0" stop-color="#000" stop-opacity="1"/><stop offset="1" stop-color="#000" stop-opacity="0"/></linearGradient>
 <path d="M1866 224 L1916 136 L1966 224 Z" fill="url(#triH)"/>
 <path d="M1866 224 L1916 136 L1966 224 Z" fill="url(#triV)"/>
 <path transform="translate(1914.5 194.5)" d="M61.9 35.75 A71.5 71.5 0 0 1 0 71.5 L0 58.5 A58.5 58.5 0 0 0 50.6 29.25 Z" fill="#4000ff"/>
 <circle cx="1917" cy="150" r="4" fill="none" stroke="#f0e0d0" stroke-width="1.5"/>
</g>
<!-- colour history bars -->
<rect x="1784" y="268" width="136" height="36" fill="#5a5a5a"/>
<rect x="1784" y="268" width="125" height="10" fill="url(#bar1)"/>
<rect x="1784" y="280" width="125" height="10" fill="url(#bar2)"/>
<rect x="1784" y="292" width="125" height="10" fill="url(#bar2)"/>
<rect x="1910" y="268" width="10" height="10" fill="#3a2214"/><rect x="1910" y="280" width="10" height="10" fill="#2a1a10"/><rect x="1910" y="292" width="10" height="10" fill="#2a1a10"/>
<rect x="1784" y="302" width="136" height="2" fill="#8a8a8a"/>
<!-- layer rows -->
<g>
 <g id="eye"><ellipse cx="1796" cy="431" rx="7" ry="5" fill="none" stroke="#d8d8d8" stroke-width="1.8"/><circle cx="1796" cy="430" r="3" fill="#d8d8d8"/></g>
 <use href="#eye" y="29"/><use href="#eye" y="58"/>
 <rect x="1812" y="425" width="21" height="13" fill="#f4f4f4" stroke="#29435f"/>
 <path d="M1814 431 h4 M1820 431 h4 M1826 431 h4" stroke="#333" stroke-width="1"/>
 <rect x="1812" y="451" width="21" height="18" fill="#e8e8e8"/>
 <path d="M1814 455 h17 M1814 459 h17 M1814 463 h17 M1814 467 h17" stroke="#c8c8c8" stroke-width="1.5" stroke-dasharray="2 2"/>
 <rect x="1812" y="480" width="21" height="18" fill="#fafafa"/>
 <g id="alp" fill="none" stroke="#dadada" stroke-width="1.5"><path d="M1841 421 h8 v8 l-4 3 M1843 423 l4 5"/></g>
 <use href="#alp" y="29"/><use href="#alp" y="58"/>
</g>
<!-- layer buttons -->
<g fill="none" stroke="#e0e0e0" stroke-width="2">
 <rect x="1790" y="638" width="15" height="15"/><path d="M1797.5 641 V650 M1793 645.5 H1802"/>
 <rect x="1845" y="637" width="12" height="12"/><path d="M1841 641 V653 H1853"/>
 <path d="M1874 641 L1882 649 L1890 641"/>
 <path d="M1906 650 L1914 642 L1922 650"/>
</g>
<path d="M1816 643 h10 l-5 5 z" fill="#bdbdbd"/>
<!-- brush tiles -->
<g id="tiles">
 <rect x="1785" y="754" width="49" height="48" fill="url(#tile)"/>
 <rect x="1837" y="754" width="49" height="48" fill="url(#tile)"/>
 <rect x="1889" y="754" width="31" height="48" fill="url(#tile)"/>
 <rect x="1785" y="806" width="49" height="48" fill="url(#tile)"/>
 <rect x="1837" y="806" width="49" height="48" fill="url(#tile)"/>
 <rect x="1889" y="806" width="31" height="48" fill="url(#tile)"/>
 <rect x="1785" y="858" width="49" height="48" fill="url(#tile)"/>
 <rect x="1837" y="858" width="49" height="48" fill="url(#tile)"/>
 <rect x="1889" y="858" width="31" height="48" fill="url(#tile)"/>
 <rect x="1785" y="910" width="49" height="48" fill="url(#tile)"/>
 <rect x="1837" y="910" width="49" height="48" fill="url(#tile)"/>
 <rect x="1889" y="910" width="31" height="48" fill="url(#tile)"/>
 <rect x="1785" y="962" width="49" height="48" fill="url(#tile)"/>
 <rect x="1837" y="962" width="49" height="48" fill="url(#tile)"/>
 <rect x="1889" y="962" width="31" height="48" fill="url(#tile)"/>
</g>
<!-- tile contents -->
<g>
 <!-- r1 eraser -->
 <path d="M1813 754 L1834 754 L1834 770 L1819 784 Z" fill="#2f5a9a"/>
 <path d="M1805 776 L1815 766 L1823 776 L1813 784 Z" fill="#f4f4f4" stroke="#aaa" stroke-width="0.6"/>
 <path d="M1797 786 l14 12 M1800 783 l14 12 M1794 790 l10 8" stroke="#777" stroke-width="1.2" stroke-dasharray="1.5 1.5"/>
 <!-- r1 c2 -->
 <path d="M1868 754 H1886 V760 L1867 781 L1861 776 Z" fill="#3a6ad0"/>
 <path d="M1857 780 L1861 776 L1867 781 L1862 784 Z" fill="#e8e8e8"/>
 <path d="M1846 788 l20 8 M1849 793 l18 6" stroke="#777" stroke-width="1.2" stroke-dasharray="1.5 1.5"/>
 <!-- r1 c3 -->
 <ellipse cx="1916" cy="772" rx="10" ry="16" fill="#777"/>
 <path d="M1895 790 l18 8" stroke="#888" stroke-width="3" stroke-dasharray="1.5 1.5"/>
 <!-- r2 c1 black pen -->
 <path d="M1821 806 H1834 V812 L1808 836 L1802 830 Z" fill="#1a1a1a"/>
 <path d="M1790 845 C1800 856 1815 848 1834 845" stroke="#333" stroke-width="4" fill="none"/>
 <!-- r2 c2 silver pen -->
 <path d="M1872 806 H1886 V812 L1860 836 L1854 830 Z" fill="#9a9a9a"/>
 <path d="M1842 845 C1852 856 1867 848 1886 845" stroke="#444" stroke-width="4" fill="none"/>
 <path d="M1920 812 L1905 830 L1900 826" stroke="#999" stroke-width="5" fill="none"/>
 <path d="M1893 845 C1900 856 1910 848 1920 845" stroke="#666" stroke-width="4" fill="none"/>
 <!-- r3 -->
 <path d="M1825 860 L1832 866 L1815 885 L1809 880 Z" fill="#e89040"/>
 <path d="M1809 880 L1815 885 L1806 892 Z" fill="#222"/>
 <path d="M1793 898 C1800 888 1806 904 1812 896 S1825 900 1834 890" stroke="#333" stroke-width="1.4" fill="none"/>
 <path d="M1876 860 L1886 866 L1866 888 L1858 882 Z" fill="#3a78e0"/>
 <path d="M1858 882 L1866 888 L1854 893 Z" fill="#d4b080"/>
 <path d="M1845 898 C1855 890 1860 904 1870 896 S1880 900 1886 896" stroke="#888" stroke-width="1.2" fill="none"/>
 <path d="M1920 870 L1906 886 L1900 890" stroke="#333" stroke-width="4" fill="none"/>
 <!-- r4 -->
 <path d="M1815 918 L1834 914 L1834 928 L1820 930 Z" fill="#c8a050"/>
 <path d="M1793 940 C1790 928 1815 925 1834 937 C1820 950 1795 950 1793 940 Z" fill="none" stroke="#444" stroke-width="1.8"/>
 <path d="M1865 912 L1886 912 L1886 925 L1868 940 L1860 932 Z" fill="#2f5a2a"/>
 <path d="M1845 945 C1855 935 1875 950 1886 945 L1886 955 C1870 958 1850 955 1845 945 Z" fill="#777" opacity="0.8"/>
 <path d="M1920 920 L1905 938" stroke="#333" stroke-width="5"/>
 <!-- r5 -->
 <path d="M1825 964 L1834 966 L1812 990 L1806 985 Z" fill="#111"/>
 <path d="M1806 985 L1812 990 L1802 996 Z" fill="#ccc" stroke="#333" stroke-width="0.8"/>
 <path d="M1792 1004 L1805 996 L1810 1002 L1834 992" stroke="#222" stroke-width="2" fill="none"/>
 <path d="M1878 964 L1886 970 L1866 990 L1860 984 Z" fill="#e07030"/>
 <path d="M1856 988 L1862 994 L1854 998 Z" fill="#c8a878"/>
 <path d="M1845 1000 C1855 1008 1870 1005 1886 1000" stroke="#111" stroke-width="5" fill="none"/>
 <path d="M1920 970 L1905 992" stroke="#333" stroke-width="6"/>
 <path d="M1895 1002 C1900 1008 1910 1005 1920 1003" stroke="#111" stroke-width="5" fill="none"/>
</g>
<!-- status-ish bits -->
<path d="M1761 1009 L1766 1014 L1771 1009 Z" fill="#d8d8d8"/>
<path d="M1745 1026 L1750 1030.5 L1745 1035 Z" fill="#d8d8d8"/>
<path d="M97 1026 L92 1030.5 L97 1035 Z" fill="#d8d8d8"/>
<rect x="7.5" y="1049.5" width="15" height="16" fill="none" stroke="#bfbfbf" stroke-width="1.5"/>
<circle cx="15" cy="1057.5" r="3.5" fill="none" stroke="#999" stroke-width="1.2"/>
<!-- grip dots on docker separator -->
<path d="M1779 547 V567" stroke="#777" stroke-width="1.5" stroke-dasharray="1 2"/>
</svg>
<span class="t" style="left:1801px;top:79px;font-size:13px;color:#d0d0d0">Advanced Colour ...</span>
<span class="t" style="left:1787px;top:105px;font-size:13px;color:#d6d6d6">Advanced Colour Selector</span>
<span class="t" style="left:1798px;top:325px;font-size:12.5px;color:#d6d6d6">Layers</span>
<span class="t" style="left:1867px;top:325px;font-size:12.5px;color:#cacaca">Channels</span>
<span class="t" style="left:1787px;top:351px;font-size:12.5px;color:#d6d6d6">Layers</span>
<span class="t" style="left:1789px;top:373px;font-size:12.5px;color:#d6d6d6">Normal</span>
<span class="t" style="left:1869px;top:397px;font-size:12.5px;color:#eef2f8">Opacity:</span>
<span class="t" style="left:1857px;top:424px;font-size:15px;color:#f0f0f0">line work</span>
<span class="t" style="left:1858px;top:454px;font-size:13px;color:#dcdcdc">Layer 2</span>
<span class="t" style="left:1858px;top:483px;font-size:13px;color:#dcdcdc">Layer 1</span>
<span class="t" style="left:1798px;top:680px;font-size:12.7px;color:#d6d6d6">Brush Presets</span>
<span class="t" style="left:1909px;top:681px;font-size:14px;color:#cacaca">B</span>
<span class="t" style="left:1787px;top:706px;font-size:12.7px;color:#d6d6d6">Brush Presets</span>
<span class="t" style="left:1789px;top:731px;font-size:12.5px;color:#d6d6d6">All</span>
<span class="t" style="left:1787px;top:1021px;font-size:12.5px;color:#9a9a9a">Search</span>


<!-- ===== status ===== -->
<span class="t" style="left:40px;top:1052.5px;font-size:15.5px;color:#d4d4d4">b) Basic-5 Size</span>
<span class="t" style="left:535px;top:1052.5px;font-size:16.2px;color:#d4d4d4">RGB/Alpha (8-bit integer/channel)&nbsp; sRGB-elle-V2-srgbtrc.icc</span>
<span class="t" style="left:1524px;top:1052.5px;font-size:15.5px;color:#d4d4d4">1600 x 1200 (31.2 MiB)</span>
<span class="t" style="left:1901px;top:1052.5px;font-size:15.5px;color:#d4d4d4">70</span>


</body></html>
